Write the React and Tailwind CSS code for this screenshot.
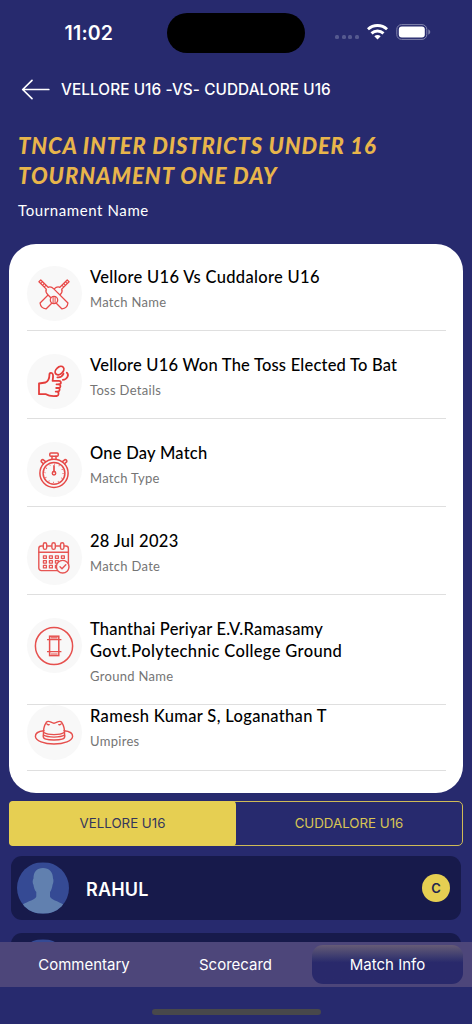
import { clsx } from "clsx";

function BatsIcon() {
  return (
    <svg width="34" height="34" viewBox="0 0 34 34" fill="none" stroke="#e84a49" strokeWidth="1.3" strokeLinejoin="round" strokeLinecap="round">
      <g transform="translate(17 18) rotate(45)">
        <path d="M-4.2 -4.5Q-4.2 -8.5 -1.3 -9.6V-20H1.3V-9.6Q4.2 -8.5 4.2 -4.5V15.5Q0 18.8 -4.2 15.5Z" />
        <path d="M-1 -17.5H1M-1 -15H1M-1 -12.5H1" strokeWidth="1" />
      </g>
      <g transform="translate(17 18) rotate(-45)">
        <path
          d="M-4.2 -4.5Q-4.2 -8.5 -1.3 -9.6V-20H1.3V-9.6Q4.2 -8.5 4.2 -4.5V15.5Q0 18.8 -4.2 15.5Z"
          fill="#f8f8f8"
        />
        <path d="M-1 -17.5H1M-1 -15H1M-1 -12.5H1" strokeWidth="1" />
      </g>
      <circle cx="17" cy="23" r="3.7" fill="#f8f8f8" />
      <path d="M16.1 19.8V26.2M18.1 19.8V26.2" strokeWidth="1" />
    </svg>
  );
}

function TossIcon() {
  return (
    <svg width="34" height="34" viewBox="0 0 34 34" fill="none" stroke="#e43d3b" strokeWidth="1.8" strokeLinejoin="round" strokeLinecap="round">
      <path d="M2 18.5L8.5 17.5C11.5 15.8 12.4 13.2 12.4 10.2C12.3 7.3 15.5 7.2 16 10C16.3 12.2 15.8 14 15.6 15.8H22C24.5 15.8 24.5 19.3 22 19.3C24 19.5 24 22.9 21.6 23C23.2 23.4 23 26.5 20.8 26.6C22 27.2 21.8 31 19.8 31C15.5 31.4 11.5 31 9 29.2H2Z" />
      <path d="M19.5 19.3H22M19.2 23H21.6M18.7 26.6H20.8" />
      <ellipse cx="22.5" cy="5.6" rx="5" ry="3.4" transform="rotate(-42 22.5 5.6)" />
      <path d="M20.4 12.3C22.7 12.6 25.4 11 26.5 8.8M25.8 14.8C29.8 14.8 32.6 10.2 29.8 7.6" />
    </svg>
  );
}

function StopwatchIcon() {
  return (
    <svg width="34" height="38" viewBox="0 0 34 38" fill="none" stroke="#e64a48" strokeWidth="1.5" strokeLinejoin="round" strokeLinecap="round">
      <circle cx="17" cy="22.3" r="14.1" />
      <circle cx="17" cy="22.3" r="10.9" />
      <rect x="12.8" y="2" width="8.4" height="3.3" rx="1" />
      <path d="M15 5.3V8.2M19 5.3V8.2M6.4 12.8L4.2 10.6Q3.8 8.7 6 8.6L8.6 10.6M27.6 12.8L29.8 10.6Q30.2 8.7 28 8.6L25.4 10.6" />
      <path d="M17 14.8V20.5" strokeWidth="1.7" />
      <circle cx="17" cy="22.3" r="1.7" />
      <circle cx="17" cy="22.3" r="9.1" strokeWidth="1.3" strokeDasharray="0.7 4.065" strokeLinecap="butt" />
    </svg>
  );
}

function CalendarIcon() {
  return (
    <svg width="34" height="34" viewBox="0 0 34 34" fill="none" stroke="#e65553" strokeWidth="1.4" strokeLinejoin="round" strokeLinecap="round">
      <rect x="1.8" y="5" width="29.6" height="24.6" rx="2.5" />
      <path d="M1.8 11.3H31.4" />
      {[8, 16.6, 25.2].map((x) => (
        <rect key={x} x={x - 1.7} y="1.8" width="3.4" height="6.6" rx="1.7" fill="#f8f8f8" />
      ))}
      {[14.8, 19.6, 24.4].map((y) =>
        [6.4, 12.4, 18.4, 24.4].map((x) => <rect key={`${x}-${y}`} x={x} y={y} width="3" height="2.5" strokeWidth="1.2" />),
      )}
      <circle cx="25.7" cy="25.7" r="6.3" fill="#f8f8f8" />
      <path d="M23 25.8L25 27.8L28.8 23.7" />
    </svg>
  );
}

function PitchIcon() {
  return (
    <svg width="40" height="40" viewBox="0 0 40 40" fill="none" stroke="#e6504e" strokeWidth="1.5">
      <circle cx="20" cy="20" r="18.6" />
      <rect x="15.6" y="10.2" width="9.2" height="19.4" />
      <path d="M16.8 11.8H23.6M16.8 28H23.6M13 13.7H27.4M13 25.7H27.4" strokeWidth="1.2" />
    </svg>
  );
}

function HatIcon() {
  return (
    <svg width="40" height="28" viewBox="0 0 40 28" fill="none" stroke="#e64f4d" strokeWidth="1.4" strokeLinejoin="round" strokeLinecap="round">
      <path d="M10 11.7C4.5 12.2 1.2 14.5 1.4 17.5C1.7 21.8 10 25 20 25S38.3 21.8 38.6 17.5C38.8 14.5 35.5 12.2 30 11.7" />
      <path d="M9.4 16.2C9.2 11 10 6.5 12.3 3.3C14.7 .5 17.2 4.2 20 4.2S25.3 .5 27.7 3.3C30 6.5 30.8 11 30.6 16.2" />
      <path d="M9.8 13.5C14 16.3 26 16.3 30.2 13.5M9.4 16.2C8 20.4 14 21 20 21S32 20.4 30.6 16.2C26 18.7 14 18.7 9.4 16.2" />
      <path d="M12.8 4.8Q13.5 6.2 15.2 5.6M27.2 4.8Q26.5 6.2 24.8 5.6" />
    </svg>
  );
}

const details = [
  { lines: [["Vellore U16 Vs Cuddalore U16", "tracking-[0.31px]"]], label: "Match Name", Icon: BatsIcon },
  { lines: [["Vellore U16 Won The Toss Elected To Bat", "tracking-[0.21px]"]], label: "Toss Details", Icon: TossIcon },
  { lines: [["One Day Match", "tracking-[0.25px]"]], label: "Match Type", Icon: StopwatchIcon },
  { lines: [["28 Jul 2023", "tracking-[0.3px]"]], label: "Match Date", Icon: CalendarIcon },
  {
    lines: [
      ["Thanthai Periyar E.V.Ramasamy", "tracking-[0.22px]"],
      ["Govt.Polytechnic College Ground", "tracking-[0.36px]"],
    ],
    label: "Ground Name",
    Icon: PitchIcon,
  },
  { lines: [["Ramesh Kumar S, Loganathan T", "tracking-[0.33px]"]], label: "Umpires", Icon: HatIcon },
];

function StatusBar() {
  return (
    <div className="flex h-[65px] shrink-0 items-center text-white">
      <span className="mt-[2px] w-[167px] pl-[64.5px] text-[19.5px] font-semibold tracking-[0.2px]">11:02</span>
      <div className="mt-px h-10 w-[138px] rounded-full bg-black" />
      <div className="ml-[30px] mt-[9px] flex gap-[2.5px]">
        {[0, 1, 2, 3].map((i) => (
          <span key={i} className="size-1 rounded-[1.5px] bg-[#55598f]" />
        ))}
      </div>
      <svg className="ml-2 mt-[-2px]" width="21" height="16" viewBox="0 0 21 16" fill="none" stroke="#fff" strokeWidth="2.9">
        <path d="M.9 5.3C6.3 .2 14.7 .2 20.1 5.3" />
        <path d="M4.5 9.4C8 6.2 13 6.2 16.5 9.4" />
        <path d="M10.5 15.5L7.3 12.2C9.1 10.7 11.9 10.7 13.7 12.2Z" fill="#fff" stroke="none" />
      </svg>
      <svg className="ml-2 mt-[-1px]" width="36" height="16" viewBox="0 0 36 16">
        <rect x=".8" y=".6" width="30" height="14.8" rx="4.8" fill="none" stroke="#8284ad" strokeWidth="1" />
        <rect x="2.8" y="2.5" width="26" height="11" rx="3" fill="#fff" />
        <path d="M32.3 5.3Q34.3 6.2 34.3 8T32.3 10.7Z" fill="#8284ad" />
      </svg>
    </div>
  );
}

function DetailRow({ lines, label, Icon, first, last }) {
  return (
    <div
      className={clsx(
        "flex gap-[7px] border-b border-[#dfdfdf]",
        first ? "pt-[22px]" : !last && "pt-[23px]",
        last ? "pb-[18px]" : "pb-[17px]",
      )}
    >
      <div className="-mb-2 flex size-[55px] items-center justify-center rounded-full bg-[#f8f8f8] pr-px">
        <Icon />
      </div>
      <div className="pl-px font-['Lato']">
        {lines.map(([text, tracking]) => (
          <p key={text} className={clsx("h-[22px] whitespace-nowrap text-[16.5px] leading-[22px] font-medium text-black", tracking)}>
            {text}
          </p>
        ))}
        <p className="mt-[3px] h-[22px] text-[13px] leading-[22px] tracking-[0.3px] text-[#757575]">{label}</p>
      </div>
    </div>
  );
}

function PlayerRow({ name, captain }) {
  return (
    <div className="flex h-16 shrink-0 items-center rounded-[11px] bg-[#171a4b] pr-[11px] pl-[6px]">
      <svg width="52" height="52" viewBox="0 0 52 52">
        <defs>
          <clipPath id="avatar">
            <circle cx="26" cy="26" r="26" />
          </clipPath>
        </defs>
        <g clipPath="url(#avatar)">
          <rect y=".5" width="52" height="51" fill="#354a94" />
          <path
            d="M26 6C32 6 36 10 36 16.5C36.8 17.5 36.5 21 35.5 23C35 26 34.3 28.5 33 30V34.5C33.5 37.5 41 39 47 43V51.5H5V43C11 39 19 37.5 19.3 34.5V30C17.8 28.5 17 26 16.5 23C15.3 21 15.5 17.5 16.5 16.5C16.3 10 20 6 26 6Z"
            fill="#6180af"
          />
        </g>
      </svg>
      <span className="ml-[17px] flex-1 pt-[2px] text-[18px] font-semibold tracking-[0.2px] text-white">{name}</span>
      {captain && (
        <span className="flex size-7 items-center justify-center rounded-full bg-[#e6cf52] pt-px text-[13px] font-semibold text-[#22254f]">
          C
        </span>
      )}
    </div>
  );
}

export default function App() {
  return (
    <div className="relative flex h-[1024px] w-[472px] flex-col overflow-hidden bg-[#272a6e] font-['Inter',sans-serif]">
      <StatusBar />

      <header className="flex h-[49px] shrink-0 items-center pl-[21px] text-white">
        <svg width="30" height="22" viewBox="0 0 30 22" fill="none" stroke="#fff" strokeWidth="1.7" strokeLinecap="round" strokeLinejoin="round">
          <path d="M27.8 10.5H1.7M11 1.3L1.7 10.5L11 19.7" />
        </svg>
        <h1 className="ml-[10px] pt-px text-[15.3px] font-medium tracking-[0.1px] whitespace-nowrap">VELLORE U16 -VS- CUDDALORE U16</h1>
      </header>

      <section className="h-[130px] shrink-0 pt-[17px] pl-[18px] font-['Lato']">
        <h2 className="text-[22px] leading-[29.5px] font-black whitespace-nowrap text-[#e8b54b] italic">
          <span className="block tracking-[0.88px]">TNCA INTER DISTRICTS UNDER 16</span>
          <span className="block tracking-[1px]">TOURNAMENT ONE DAY</span>
        </h2>
        <p className="mt-[9px] text-[15px] leading-[22px] tracking-[0.6px] text-white">Tournament Name</p>
      </section>

      <section className="mx-[9px] h-[549px] shrink-0 rounded-[27px] bg-white pr-[17px] pl-[18px]">
        {details.map((row, i) => (
          <DetailRow key={row.label} {...row} first={i === 0} last={i === details.length - 1} />
        ))}
      </section>

      <div className="mx-[9px] mt-2 flex h-[45px] shrink-0 rounded-[5px] border border-[#cfbb56] text-[13.3px]">
        <button className="-m-px w-[227px] rounded-[4px] bg-[#e6cf52] pt-px text-[#34365c]">VELLORE U16</button>
        <button className="flex-1 pt-px pl-px text-[#d9c554]">CUDDALORE U16</button>
      </div>

      <div className="mx-[11px] mt-[10px] flex flex-col gap-[13px]">
        <PlayerRow name="RAHUL" captain />
        <PlayerRow name="" />
      </div>

      <nav className="absolute inset-x-0 bottom-0 h-[82px] bg-[#272a6e]">
        <div className="flex h-[45px] items-center bg-[#4d467a] pr-[9px] text-[15px] text-white">
          <button className="w-[168px] pt-[2px]">Commentary</button>
          <button className="w-[135px] pt-[2px]">Scorecard</button>
          <button className="ml-[9px] h-[39px] flex-1 rounded-[11px] bg-linear-to-b from-[#665b75] to-[#29296b] to-45% pt-[2px]">Match Info</button>
        </div>
        <div className="mx-auto mt-[22px] h-[6px] w-[169px] rounded-full bg-[#48484b]" />
      </nav>
    </div>
  );
}
